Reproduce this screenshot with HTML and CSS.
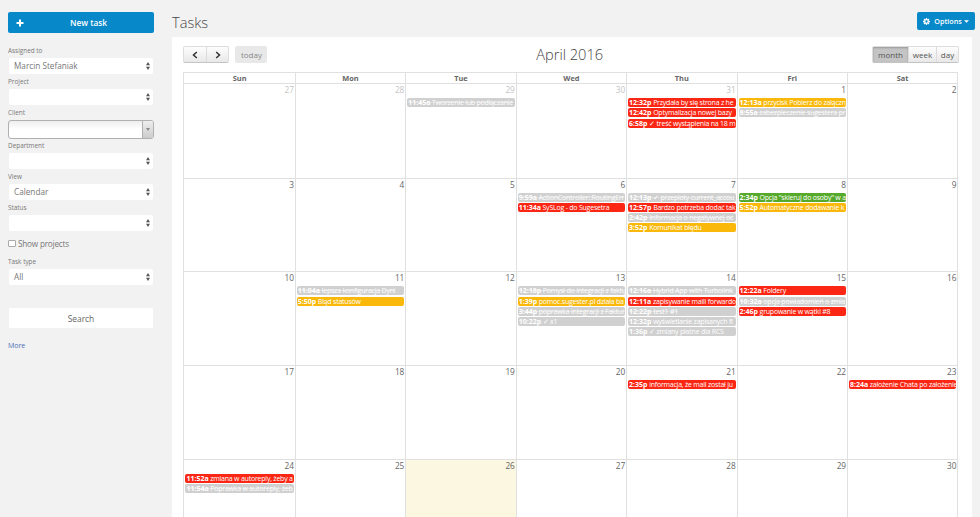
FILE: index.html
```
<!DOCTYPE html>
<html lang="en">
<head>
    <meta charset="UTF-8">
    <title>Tasks</title>
    <link rel="stylesheet" href="styles.css">
</head>
<body>
    <div class="sidebar">
        <button class="new-task">
            <svg class="plus" viewBox="0 0 8 8"><path d="M3 .5h2V3h2.500v2H5v2.500H3V5H.5V3H3z"/></svg>
            <span>New task</span>
        </button>

        <label>Assigned to</label>
        <div class="select"><span>Marcin Stefaniak</span><svg viewBox="0 0 4 8"><path d="M2 0l2 3.200H0zM2 8L0 4.800h4z"/></svg></div>
        <label>Project</label>
        <div class="select"><span></span><svg viewBox="0 0 4 8"><path d="M2 0l2 3.200H0zM2 8L0 4.800h4z"/></svg></div>
        <label>Client</label>
        <div class="combo"><span class="combo-arrow"><svg viewBox="0 0 4 3"><path d="M0 0h4L2 3z"/></svg></span></div>
        <label class="short">Department</label>
        <div class="select"><span></span><svg viewBox="0 0 4 8"><path d="M2 0l2 3.200H0zM2 8L0 4.800h4z"/></svg></div>
        <label>View</label>
        <div class="select"><span>Calendar</span><svg viewBox="0 0 4 8"><path d="M2 0l2 3.200H0zM2 8L0 4.800h4z"/></svg></div>
        <label>Status</label>
        <div class="select"><span></span><svg viewBox="0 0 4 8"><path d="M2 0l2 3.200H0zM2 8L0 4.800h4z"/></svg></div>
        <div class="check"><i class="box"></i><span>Show projects</span></div>
        <label>Task type</label>
        <div class="select"><span>All</span><svg viewBox="0 0 4 8"><path d="M2 0l2 3.200H0zM2 8L0 4.800h4z"/></svg></div>
        <button class="search">Search</button>
        <a class="more">More</a>
    </div>

    <div class="main">
        <div class="top">
            <h1>Tasks</h1>
            <button class="options">
                <svg class="gear" viewBox="0 0 14 14"><circle cx="7" cy="7" r="3.600"/><path d="M7 0v3M7 11v3M0 7h3M11 7h3M2 2l2.200 2.200M9.800 9.800L12 12M12 2L9.800 4.200M4.200 9.800L2 12"/></svg>
                <span>Options</span>
                <svg class="caret" viewBox="0 0 6 3"><path d="M0 0h6L3 3z"/></svg>
            </button>
        </div>

        <div class="content">
            <div class="toolbar">
                <div class="toolbar-left">
                    <div class="group">
                        <span class="btn arrow"><svg viewBox="0 0 6 8"><path d="M4.800 1L1.500 4l3.300 3"/></svg></span>
                        <span class="btn arrow"><svg viewBox="0 0 6 8"><path d="M1.200 1l3.300 3-3.300 3"/></svg></span>
                    </div>
                    <span class="today-btn">today</span>
                </div>
                <h2>April 2016</h2>
                <div class="toolbar-right">
                    <div class="group">
                        <span class="btn month">month</span>
                        <span class="btn week">week</span>
                        <span class="btn day-btn">day</span>
                    </div>
                </div>
            </div>

            <div class="calendar">
                <div class="week-head">
                    <div>Sun</div><div>Mon</div><div>Tue</div><div>Wed</div><div>Thu</div><div>Fri</div><div>Sat</div>
                </div>

                <div class="week-row first">
                    <div class="day other"><span class="num">27</span></div>
                    <div class="day other"><span class="num">28</span></div>
                    <div class="day other"><span class="num">29</span>
                        <div class="event grey done"><b>11:45a</b> Tworzenie lub podłączanie</div>
                    </div>
                    <div class="day other"><span class="num">30</span></div>
                    <div class="day other"><span class="num">31</span>
                        <div class="event red"><b>12:32p</b> Przydała by się strona z he</div>
                        <div class="event red"><b>12:42p</b> Optymalizacja nowej bazy</div>
                        <div class="event red"><b>6:58p</b> ✓ treść wystąpienia na 18 m</div>
                    </div>
                    <div class="day"><span class="num">1</span>
                        <div class="event yellow"><b>12:13a</b> przycisk Pobierz do załączn</div>
                        <div class="event grey done"><b>8:55a</b> zabezpieczenie sugestera pr</div>
                    </div>
                    <div class="day"><span class="num">2</span></div>
                </div>

                <div class="week-row">
                    <div class="day"><span class="num">3</span></div>
                    <div class="day"><span class="num">4</span></div>
                    <div class="day"><span class="num">5</span></div>
                    <div class="day"><span class="num">6</span>
                        <div class="event grey done"><b>9:59a</b> ActionController::RoutingErr</div>
                        <div class="event red"><b>11:34a</b> SySLog - do Sugesetra</div>
                    </div>
                    <div class="day"><span class="num">7</span>
                        <div class="event grey done"><b>12:13p</b> ✓ przeploty current_accou</div>
                        <div class="event red"><b>12:57p</b> Bardzo potrzeba dodać tak</div>
                        <div class="event grey done"><b>2:42p</b> Informacja o negatywnej oc</div>
                        <div class="event yellow"><b>3:52p</b> Komunikat błędu</div>
                    </div>
                    <div class="day"><span class="num">8</span>
                        <div class="event green"><b>2:34p</b> Opcja "skieruj do osoby" w a</div>
                        <div class="event yellow"><b>5:52p</b> Automatyczne dodawanie k</div>
                    </div>
                    <div class="day"><span class="num">9</span></div>
                </div>

                <div class="week-row">
                    <div class="day"><span class="num">10</span></div>
                    <div class="day"><span class="num">11</span>
                        <div class="event grey done"><b>11:04a</b> lepsza konfiguracja Dyni</div>
                        <div class="event yellow"><b>5:50p</b> Błąd statusów</div>
                    </div>
                    <div class="day"><span class="num">12</span></div>
                    <div class="day"><span class="num">13</span>
                        <div class="event grey done"><b>12:18p</b> Pomysł do integracji z faktu</div>
                        <div class="event yellow"><b>1:39p</b> pomoc.sugester.pl działa ba</div>
                        <div class="event grey done"><b>3:44p</b> poprawka integracji z Faktur</div>
                        <div class="event grey"><b>10:22p</b> ✓ x1</div>
                    </div>
                    <div class="day"><span class="num">14</span>
                        <div class="event grey done"><b>12:16a</b> Hybrid App with Turbolink</div>
                        <div class="event red"><b>12:11a</b> zapisywanie maili forwardo</div>
                        <div class="event grey done"><b>12:22p</b> test1 #1</div>
                        <div class="event grey"><b>12:32p</b> wyświetlanie zapisanych fi</div>
                        <div class="event grey"><b>1:36p</b> ✓ zmiany płatne dla RCS</div>
                    </div>
                    <div class="day"><span class="num">15</span>
                        <div class="event red"><b>12:22a</b> Foldery</div>
                        <div class="event grey done"><b>10:32a</b> opcja powiadomień o zmia</div>
                        <div class="event red"><b>2:46p</b> grupowanie w wątki #8</div>
                    </div>
                    <div class="day"><span class="num">16</span></div>
                </div>

                <div class="week-row">
                    <div class="day"><span class="num">17</span></div>
                    <div class="day"><span class="num">18</span></div>
                    <div class="day"><span class="num">19</span></div>
                    <div class="day"><span class="num">20</span></div>
                    <div class="day"><span class="num">21</span>
                        <div class="event red"><b>2:35p</b> informacja, że mail został ju</div>
                    </div>
                    <div class="day"><span class="num">22</span></div>
                    <div class="day"><span class="num">23</span>
                        <div class="event red"><b>8:24a</b> założenie Chata po założenie</div>
                    </div>
                </div>

                <div class="week-row last">
                    <div class="day"><span class="num">24</span>
                        <div class="event red"><b>11:52a</b> zmiana w autoreply, żeby a</div>
                        <div class="event grey done"><b>11:54a</b> Poprawka w autoreply, żeb</div>
                    </div>
                    <div class="day"><span class="num">25</span></div>
                    <div class="day today"><span class="num">26</span></div>
                    <div class="day"><span class="num">27</span></div>
                    <div class="day"><span class="num">28</span></div>
                    <div class="day"><span class="num">29</span></div>
                    <div class="day"><span class="num">30</span></div>
                </div>
            </div>
        </div>
    </div>
</body>
</html>
```
FILE: styles.css
```
* {
    box-sizing: border-box;
}

body {
    margin: 0;
    display: flex;
    height: 517px;
    overflow: hidden;
    background: #f2f2f2;
    font-family: "Open Sans", "Noto Sans", sans-serif;
    font-size: 8px;
    color: #666;
}

svg {
    display: block;
    fill: currentColor;
}

button {
    border: 0;
    padding: 0;
    font-family: inherit;
}

/* sidebar */
.sidebar {
    width: 172px;
    flex: none;
    padding: 12px 18px 0 8px;
    display: flex;
    flex-direction: column;
}

.new-task {
    height: 21px;
    margin-bottom: 10px;
    display: flex;
    align-items: center;
    padding-left: 8px;
    background: #0688c9;
    border-radius: 2px;
    color: #fff;
    font-size: 8.3px;
    font-weight: 600;
}

.new-task span {
    flex: 1;
    padding: 0 1px 1px 0;
    text-align: center;
}

.plus {
    width: 8px;
    height: 8px;
}

.sidebar label {
    height: 15px;
    line-height: 15px;
    font-size: 6.4px;
    color: #777;
}

.sidebar label.short {
    height: 14px;
    line-height: 13px;
}

.select {
    height: 16px;
    margin-right: 1px;
    margin-left: 1px;
    padding: 0 3px 0 5px;
    display: flex;
    align-items: center;
    justify-content: space-between;
    background: #fff;
    border-radius: 2px;
    color: #777;
    font-size: 8.2px;
    line-height: 16px;
}

.select svg {
    width: 4px;
    height: 8px;
    color: #555;
}

.combo {
    height: 19px;
    display: flex;
    justify-content: flex-end;
    border: 1px solid #b0b0b0;
    border-radius: 3px;
    background: linear-gradient(#eee, #fff 50%);
    overflow: hidden;
}

.combo-arrow {
    width: 11px;
    display: flex;
    align-items: center;
    justify-content: center;
    border-left: 1px solid #b0b0b0;
    background: linear-gradient(#eee, #ccc);
    color: #888;
}

.combo-arrow svg {
    width: 4px;
    height: 3px;
}

.check {
    height: 23px;
    padding-top: 2px;
    display: flex;
    align-items: center;
    gap: 2px;
    color: #777;
    font-size: 8.2px;
    letter-spacing: -.2px;
}

.box {
    width: 8px;
    height: 7px;
    border: 1px solid #aaa;
    border-radius: 1px;
    background: #fff;
}

.search {
    height: 20px;
    margin: 23px 1px 0;
    background: #fff;
    border-radius: 1px;
    color: #666;
    font-size: 8.4px;
}

.more {
    margin-top: 12px;
    color: #4a70b5;
    font-size: 7px;
    line-height: 11px;
}

/* main column */
.main {
    flex: 1;
    min-width: 0;
    display: flex;
    flex-direction: column;
}

.top {
    height: 37px;
    flex: none;
    display: flex;
    justify-content: space-between;
    padding: 12px 5px 0 0;
}

.top h1 {
    margin: 0;
    font-size: 14.6px;
    line-height: 21px;
    font-weight: 300;
    color: #444;
}

.options {
    width: 58px;
    height: 18px;
    display: flex;
    align-items: center;
    justify-content: center;
    background: #0688c9;
    border-radius: 2px;
    color: #fff;
    font-size: 7.2px;
    font-weight: 600;
}

.gear {
    width: 7px;
    height: 7px;
    margin-right: 4px;
    fill: none;
    stroke: #fff;
    stroke-width: 2.6;
}

.caret {
    width: 5px;
    height: 3px;
    margin-left: 2px;
}

.content {
    flex: 1;
    min-height: 0;
    margin-right: 8px;
    padding: 9px 13px 0 11.4px;
    background: #fff;
}

.toolbar {
    height: 26px;
    display: grid;
    grid-template-columns: 1fr auto 1fr;
    align-items: start;
}

.toolbar-left {
    display: flex;
    gap: 6px;
}

.toolbar-right {
    display: flex;
    justify-content: flex-end;
}

.toolbar h2 {
    margin: 0 3px 0 0;
    font-size: 14.6px;
    line-height: 17px;
    font-weight: 300;
    color: #444;
}

.group {
    display: flex;
    height: 17px;
    border: 1px solid #ddd;
    border-bottom-color: #c4c4c4;
    border-radius: 2px;
    background: linear-gradient(#fdfdfd, #e8e8e8);
    overflow: hidden;
}

.btn {
    display: flex;
    align-items: center;
    justify-content: center;
    color: #555;
    font-size: 8px;
}

.btn + .btn {
    border-left: 1px solid #dcdcdc;
}

.arrow {
    width: 22px;
}

.arrow svg {
    width: 6px;
    height: 8px;
    fill: none;
    stroke: #333;
    stroke-width: 1.5;
}

.today-btn {
    width: 32px;
    height: 17px;
    line-height: 17px;
    text-align: center;
    border-radius: 2px;
    background: #e8e8e8;
    color: #888;
    font-size: 8px;
}

.month {
    width: 35px;
    background: #c4c4c4;
    box-shadow: inset 0 1px 2px #999;
}

.week {
    width: 28px;
}

.day-btn {
    width: 22px;
}

/* calendar grid */
.calendar {
    width: 775px;
    border: 1px solid #e0e0e0;
    border-bottom: 0;
}

.week-head,
.week-row {
    display: grid;
    grid-template-columns: repeat(7, 1fr);
}

.week-head {
    height: 10px;
    line-height: 11px;
    text-align: center;
    font-size: 7.4px;
    font-weight: 700;
}

.week-head div + div,
.day + .day {
    border-left: 1px solid #e0e0e0;
}

.week-row {
    height: 93.8px;
    border-top: 1px solid #e0e0e0;
}

.week-row.first {
    height: 94.5px;
}

.week-row.last {
    height: 58px;
}

.day {
    min-width: 0;
    padding: 0 1px;
}

.num {
    display: block;
    height: 14px;
    line-height: 12px;
    text-align: right;
    font-size: 8.3px;
    letter-spacing: -.1px;
}

.other .num {
    color: #c4c4c4;
}

.today {
    background: #fbf7e1;
}

.event {
    height: 9px;
    margin-bottom: 1.25px;
    padding: 0 1px;
    border-radius: 2px;
    line-height: 9px;
    font-size: 7px;
    letter-spacing: -.22px;
    color: #fff;
    white-space: nowrap;
    overflow: hidden;
}

.event b {
    letter-spacing: 0;
}

.red {
    background: #fb2613;
}

.yellow {
    background: #fab80a;
}

.green {
    background: #56aa2b;
}

.grey {
    background: #d0d0d0;
}

.done {
    text-decoration: line-through;
    text-decoration-color: rgba(255, 255, 255, .35);
}
```
